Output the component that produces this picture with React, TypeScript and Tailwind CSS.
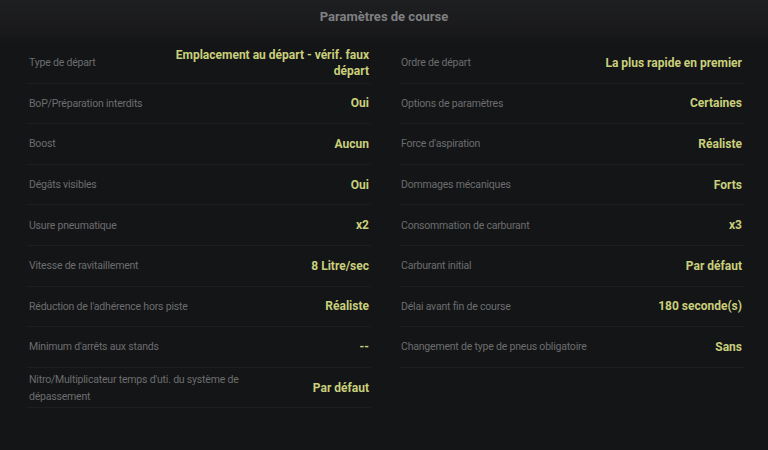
import React from 'react'

type Row = { label: string; value: string }

const left: Row[] = [
  { label: 'Type de départ', value: 'Emplacement au départ - vérif. faux départ' },
  { label: 'BoP/Préparation interdits', value: 'Oui' },
  { label: 'Boost', value: 'Aucun' },
  { label: 'Dégâts visibles', value: 'Oui' },
  { label: 'Usure pneumatique', value: 'x2' },
  { label: 'Vitesse de ravitaillement', value: '8 Litre/sec' },
  { label: "Réduction de l'adhérence hors piste", value: 'Réaliste' },
  { label: "Minimum d'arrêts aux stands", value: '--' },
  { label: "Nitro/Multiplicateur temps d'uti. du système de dépassement", value: 'Par défaut' },
]

const right: Row[] = [
  { label: 'Ordre de départ', value: 'La plus rapide en premier' },
  { label: 'Options de paramètres', value: 'Certaines' },
  { label: "Force d'aspiration", value: 'Réaliste' },
  { label: 'Dommages mécaniques', value: 'Forts' },
  { label: 'Consommation de carburant', value: 'x3' },
  { label: 'Carburant initial', value: 'Par défaut' },
  { label: 'Délai avant fin de course', value: '180 seconde(s)' },
  { label: 'Changement de type de pneus obligatoire', value: 'Sans' },
]

function SettingRow({ label, value }: Row) {
  return (
    <div className="flex h-[40.6px] items-center justify-between gap-4 border-b border-[#1d1e20] px-[2px]">
      <span className="max-w-[245px] text-[10.5px] leading-[17px] tracking-[-0.2px] text-[#6c6d6e]">{label}</span>
      <span className="max-w-[200px] text-right text-[12px] font-bold leading-[16px] text-[#c9cf7b]">{value}</span>
    </div>
  )
}

export default function App() {
  return (
    <div className="h-[450px] w-[768px] overflow-hidden bg-[#141517] font-['Roboto',sans-serif]">
      <header className="flex h-[33px] items-center justify-center bg-gradient-to-b from-[#1e1f21] to-[#19191b]">
        <h1 className="text-[13px] font-bold text-[#7f8081]">Paramètres de course</h1>
      </header>
      <div className="h-[10px] bg-gradient-to-b from-[#18191b] to-[#141517]" />
      <main className="grid grid-cols-[344px_345px] gap-x-[28px] pl-[27px]">
        <div className="flex flex-col">
          {left.map(r => <SettingRow key={r.label} {...r} />)}
        </div>
        <div className="flex flex-col">
          {right.map(r => <SettingRow key={r.label} {...r} />)}
        </div>
      </main>
    </div>
  )
}
